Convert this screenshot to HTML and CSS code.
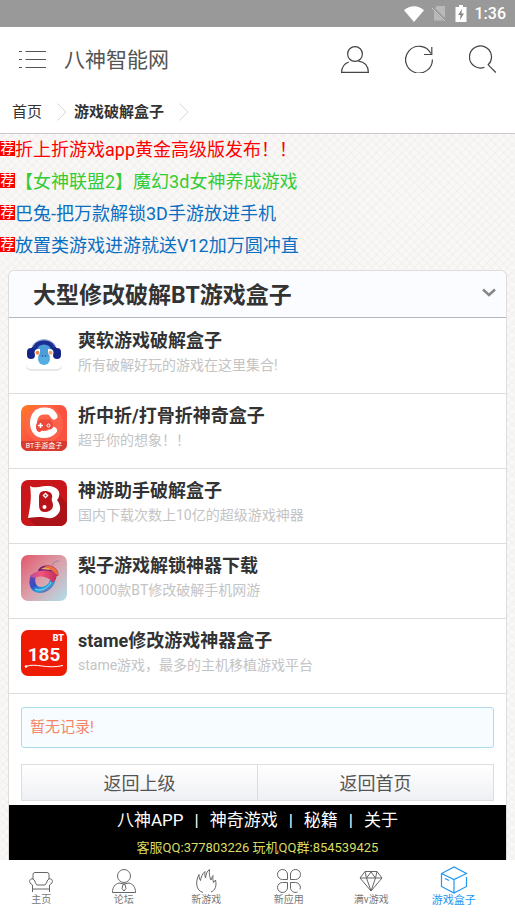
FILE: index.html
```html
<!DOCTYPE html>
<html lang="zh-CN">
<head>
  <meta charset="UTF-8">
  <meta name="viewport" content="width=device-width, initial-scale=1">
  <title>八神智能网</title>
  <link rel="stylesheet" href="styles.css">
</head>
<body>
  <div class="status-bar">
    <svg class="status-wifi" viewBox="0 0 20 16" fill="#fff"><path d="M0 4.200C6-1 14-1 20 4.200L10 16z"/></svg>
    <svg class="status-sim" viewBox="0 0 15 17"><path d="M5 1h8v14.500H2V4z" fill="#b9b9b9"/><path d="M0 2l14 14" stroke="#999" stroke-width="2.500"/><path d="M0 3l13 13" stroke="#c8c8c8"/></svg>
    <svg class="status-battery" viewBox="0 0 12 17"><path d="M4 0h4v2h3.500v15H.5V2H4z" fill="#fff"/><path d="M7 4L3 10h2.500L5 15l4-6.500H6.500z" fill="#888"/></svg>
    <span>1:36</span>
  </div>

  <header class="header">
    <button class="icon-btn" aria-label="菜单">
      <svg viewBox="0 0 28 28" fill="none" stroke="#555"><path d="M0 6.500h3M6.500 6.500h20.500M0 14.500h3M6.500 14.500h20.500M0 22.500h3M6.500 22.500h20.500"/></svg>
    </button>
    <h1>八神智能网</h1>
    <div class="header-actions">
      <button class="icon-btn" aria-label="用户">
        <svg viewBox="0 0 28 28" fill="none" stroke="#444" stroke-width="1.200"><circle cx="14" cy="9" r="7.400"/><path d="M7.800 17C3.300 18.500.8 22 .6 27.300h26.800c-.3-6.500-4.200-10.600-10-11.200"/></svg>
      </button>
      <button class="icon-btn" aria-label="刷新">
        <svg viewBox="0 0 28 28" fill="none" stroke="#444" stroke-width="1.200"><path d="M27.400 14.500a13.400 13.400 0 1 1-1.500-6"/><path d="M26.800 2v7.500H19"/></svg>
      </button>
      <button class="icon-btn" aria-label="搜索">
        <svg viewBox="0 0 28 28" fill="none" stroke="#444" stroke-width="1.200"><path d="M15.500 22.200A11 11 0 1 1 19.200 19.800l7.600 7.700"/></svg>
      </button>
    </div>
  </header>

  <nav class="crumbs">
    <a href="#">首页</a>
    <svg class="crumb-arrow" viewBox="0 0 10 18" fill="none" stroke="#d6d6d6"><path d="M.5.5L9 9l-8.500 8.500"/></svg>
    <a href="#" class="current">游戏破解盒子</a>
    <svg class="crumb-arrow" viewBox="0 0 10 18" fill="none" stroke="#d6d6d6"><path d="M.5.5L9 9l-8.500 8.500"/></svg>
  </nav>

  <ul class="news">
    <li><span class="tag">荐</span><a href="#" class="red">折上折游戏app黄金高级版发布！！</a></li>
    <li><span class="tag">荐</span><a href="#" class="green">【女神联盟2】魔幻3d女神养成游戏</a></li>
    <li><span class="tag">荐</span><a href="#">巴兔-把万款解锁3D手游放进手机</a></li>
    <li><span class="tag">荐</span><a href="#">放置类游戏进游就送V12加万圆冲直</a></li>
  </ul>

  <main class="card">
    <div class="card-header">
      <h2>大型修改破解BT游戏盒子</h2>
      <button class="toggle" aria-label="展开">
        <svg viewBox="0 0 14 9" fill="none" stroke="#888" stroke-width="2.500"><path d="M1 1.500l6 5.500 6-5.500"/></svg>
      </button>
    </div>

    <div class="apps">
      <a class="app" href="#">
        <svg class="app-icon" viewBox="0 0 46 46">
          <rect x="5" y="6" width="36" height="35" rx="5" fill="#e8e8e8"/>
          <rect x="5" y="4" width="36" height="35" rx="5" fill="#fff"/>
          <path d="M10 23C9 5 37 5 36 23z" fill="#1c2f91"/>
          <path d="M11.500 17C15 7.500 31 7.500 34.500 17" fill="none" stroke="#a9c4ea"/>
          <path d="M18 16q5-3 10 0l2 3H16z" fill="#4b9dd9"/>
          <rect x="6" y="18" width="8" height="11" rx="4" fill="#152487"/>
          <rect x="32" y="18" width="8" height="11" rx="4" fill="#152487"/>
          <ellipse cx="23" cy="29" rx="6" ry="6" fill="#55aee2"/>
          <rect x="13.500" y="19" width="19" height="7.500" rx="3.700" fill="#fff"/>
          <path d="M19 19h8v4l2 4H17l2-4z" fill="#4b9dd9"/>
          <circle cx="16.500" cy="22.700" r="2" fill="#e88a45"/>
          <circle cx="29.500" cy="22.700" r="2" fill="#f0aa79"/>
          <path d="M21.500 25.500v1M24.500 25.500v1" stroke="#1c2f91"/>
        </svg>
        <div class="app-text"><h3>爽软游戏破解盒子</h3><p>所有破解好玩的游戏在这里集合!</p></div>
      </a>
      <a class="app" href="#">
        <svg class="app-icon" viewBox="0 0 46 46">
          <defs>
            <linearGradient id="orange" x1="0" y1="0" x2="1" y2="1"><stop offset="0" stop-color="#ff7a25"/><stop offset=".5" stop-color="#fb5140"/></linearGradient>
            <clipPath id="round"><rect width="46" height="46" rx="7"/></clipPath>
          </defs>
          <g clip-path="url(#round)">
            <rect width="46" height="46" fill="url(#orange)"/>
            <circle cx="23" cy="19" r="19" fill="#ff6a54" opacity=".6"/>
            <path d="M0 36h46v10H0z" fill="#d93b30"/>
            <path d="M33 11C30 5 26 6 23 6c-7 0-10.500 5-10.500 12 0 8 5 11.500 10 11.500 4 0 7-.5 10-4" fill="none" stroke="#fff" stroke-width="7" stroke-linecap="round"/>
            <path d="M19 14.500h10q3 3 3 8l-2 2-3-1-2 2-3-1-3 2.500q-4 0-4-5 0-5 4-7.500z" fill="#ee4a3c"/>
            <path d="M19.500 18v5M17 20.500h5" stroke="#fff" stroke-width="1.500"/>
            <circle cx="27.500" cy="20.500" r="1.500" fill="none" stroke="#fff"/>
            <text class="icon-caption" x="23" y="43" text-anchor="middle">BT手游盒子</text>
          </g>
        </svg>
        <div class="app-text"><h3>折中折/打骨折神奇盒子</h3><p>超乎你的想象！！</p></div>
      </a>
      <a class="app" href="#">
        <svg class="app-icon" viewBox="0 0 46 46">
          <rect width="46" height="46" rx="7" fill="#c8161b"/>
          <path d="M7 38l8 8h24a7 7 0 0 0 7-7V24L37 13z" fill="#ac1318"/>
          <path d="M9 6c3 2 5 1 9 1 9-2 18-1 20 5 1 4-1 7-2 8 4 5 4 11 1 14-5 6-10 4-17 3-4 0-8 0-13 1 2-11 4-20 2-32z" fill="#fff"/>
          <path d="M24 11c5 0 8 3 7 7-1 3 1 4 1 7 0 5-4 7-8 7-5 0-6-3-6-8v-7c0-4 2-6 6-6z" fill="#b8141a"/>
          <path d="M24.500 12.500l3 3-3 3-3-3z" fill="#fff"/>
          <circle cx="24.500" cy="15.500" r="1" fill="#b8141a"/>
          <circle cx="23.500" cy="27" r="2" fill="#fff"/>
        </svg>
        <div class="app-text"><h3>神游助手破解盒子</h3><p>国内下载次数上10亿的超级游戏神器</p></div>
      </a>
      <a class="app" href="#">
        <svg class="app-icon" viewBox="0 0 46 46">
          <defs>
            <linearGradient id="sky" x1="0" y1="0" x2="1" y2="1"><stop offset="0" stop-color="#e2566b"/><stop offset=".5" stop-color="#dba0aa"/><stop offset="1" stop-color="#afe0ec"/></linearGradient>
            <linearGradient id="ring" x1="0" y1="0" x2=".8" y2="1"><stop offset="0" stop-color="#7b3fae"/><stop offset=".45" stop-color="#2d4fc4"/><stop offset=".7" stop-color="#27a4df"/><stop offset="1" stop-color="#b13f8f"/></linearGradient>
            <linearGradient id="band" x1="0" y1="0" x2="1" y2="0"><stop offset="0" stop-color="#b64a9b"/><stop offset=".4" stop-color="#f2557c"/><stop offset="1" stop-color="#c22c5c"/></linearGradient>
          </defs>
          <rect width="46" height="46" rx="7" fill="url(#sky)"/>
          <path d="M31 11c1-4 3-5 7-5" fill="none" stroke="#b08da3" stroke-width="1.500"/>
          <path d="M17 16c1-6 12-8 17-3 3 2 4 5 3 8l-6-2z" fill="#6d2277"/>
          <path d="M23 11c7-2 15 3 14.500 10C32 18 30 13 23 11z" fill="#f06a3d"/>
          <path d="M20 14c4-3 8-2 10 1z" fill="#f6a55a"/>
          <path d="M10 20c-4 9 0 18 9 18 8 0 16-7 16-17l-5-1c0 7-4 12-10 12-5 0-7-5-5-11z" fill="url(#ring)"/>
          <path d="M9 21c5-6 20-8 27-1-1 4-2 6-4 8-4-6-12-8-19-5z" fill="url(#band)"/>
          <path d="M14 34c7 3 13-1 16-7" fill="none" stroke="#8adcf2"/>
        </svg>
        <div class="app-text"><h3>梨子游戏解锁神器下载</h3><p>10000款BT修改破解手机网游</p></div>
      </a>
      <a class="app" href="#">
        <svg class="app-icon" viewBox="0 0 46 46">
          <rect width="46" height="46" rx="7" fill="#ee1b05"/>
          <text class="icon-bt" x="43" y="11" text-anchor="end">BT</text>
          <text class="icon-num" x="23" y="31" text-anchor="middle">185</text>
          <path d="M5 36.500c10-4 20 3 37-1" fill="none" stroke="#fff"/>
          <circle cx="5" cy="36.500" r="1.300" fill="#fff"/>
        </svg>
        <div class="app-text"><h3>stame修改游戏神器盒子</h3><p>stame游戏，最多的主机移植游戏平台</p></div>
      </a>
    </div>

    <p class="notice">暂无记录!</p>

    <div class="pager">
      <button>返回上级</button>
      <button>返回首页</button>
    </div>

    <footer class="footer">
      <div class="footer-links">
        <a href="#">八神APP</a><span>|</span><a href="#">神奇游戏</a><span>|</span><a href="#">秘籍</a><span>|</span><a href="#">关于</a>
      </div>
      <p>客服QQ:377803226 玩机QQ群:854539425</p>
    </footer>
  </main>

  <nav class="tabbar">
    <a href="#">
      <svg viewBox="0 0 24 24" fill="none" stroke="#666"><path d="M4 10V5.500Q4 3.500 6 3.500h12q2 0 2 2V10M4 10C1 9 0 12 1 14l2.500 2v4h17v-4l2.500-2c1-2 0-5-3-4-2 1-2 3-2.500 4L16 16H8l-1.500-2C6 13 6 11 4 10zM3.500 20v3M20.500 20v3"/></svg>
      主页
    </a>
    <a href="#">
      <svg viewBox="0 0 24 24" fill="none" stroke="#666"><circle cx="12" cy="7" r="6.500"/><path d="M7 14C3 15 .5 18 .5 23.500h23c0-5.500-2.500-8.500-6.500-9.500l-5 1zM11 15.500h2l1 4-2 2.500-2-2.500z"/></svg>
      论坛
    </a>
    <a href="#">
      <svg viewBox="0 0 24 24" fill="none" stroke="#666"><path d="M9 23.500C2 21.500 1 13 5 5.500c0 3 .5 4.500 1.500 6C7 8 8.500 4.500 11 2.500c-.5 3 0 4.500.5 6.500C12 5 13 2 15.500.5 15 5 15.500 8 17 11c.5-2 1-3 2-4.500-.5 3 0 4.500.5 7l2-2.500c1.500 6-.5 10.500-4.500 12"/></svg>
      新游戏
    </a>
    <a href="#">
      <svg viewBox="0 0 24 24" fill="none" stroke="#666"><path d="M10.500 10.500V6a5 5 0 1 0-5 4.500zM13.500 10.500V6a5 5 0 1 1 5 4.500zM10.500 13.500V18a5 5 0 1 1-5-4.500zM23 20.500a5 5 0 0 0-4.500-7h-5V18a5 5 0 0 0 7 5"/></svg>
      新应用
    </a>
    <a href="#">
      <svg viewBox="0 0 24 24" fill="none" stroke="#666"><path d="M6 2.500h12L23 9 12 22 1 9zM1 9h22M6 2.500L7.500 9 12 22l4.500-13L18 2.500M7.500 9L12 3l4.500 6"/></svg>
      满v游戏
    </a>
    <a href="#" class="active">
      <svg viewBox="0 0 28 28" fill="none" stroke="#2196f3" stroke-width="1.200"><path d="M26.500 11v9.500L14 27 1.500 20.500v-13L14 1l12.500 6.500L14 13.500 1.500 7.500M14 13.500V27M5 12.500l4 2"/></svg>
      游戏盒子
    </a>
  </nav>
</body>
</html>
```

FILE: styles.css
```css
* {
  box-sizing: border-box;
  margin: 0;
  padding: 0;
}

body {
  font-family: Roboto, "Noto Sans CJK SC", sans-serif;
  color: #333;
  padding-bottom: 55px;
  background-color: #f9f8f7;
  background-image:
    repeating-linear-gradient(45deg, #efedeb66 0 2px, transparent 2px 6px),
    repeating-linear-gradient(-45deg, #efedeb66 0 2px, transparent 2px 6px);
}

a {
  color: inherit;
  text-decoration: none;
}

ul {
  list-style: none;
}

svg {
  display: block;
  flex: none;
}

button {
  font: inherit;
  color: inherit;
  background: none;
  border: none;
  cursor: pointer;
}

.status-bar {
  display: flex;
  align-items: center;
  justify-content: flex-end;
  gap: 8px;
  height: 27px;
  padding-right: 9px;
  background: #999;
  color: #fff;
  font-size: 16px;
  font-weight: 500;
}

.status-wifi {
  width: 20px;
  height: 16px;
}

.status-sim {
  width: 15px;
  height: 17px;
}

.status-battery {
  width: 12px;
  height: 17px;
}

.header {
  display: flex;
  align-items: center;
  gap: 17px;
  height: 64px;
  padding: 0 18px 0 19px;
  background: #fff;
}

.header h1 {
  flex: 1;
  padding-bottom: 3px;
  font-size: 21px;
  font-weight: 400;
  color: #555;
}

.header-actions {
  display: flex;
  gap: 36px;
}

.icon-btn,
.icon-btn svg {
  width: 28px;
  height: 28px;
}

.crumbs {
  display: flex;
  align-items: center;
  height: 43px;
  padding: 0 12px;
  background: #fff;
  border-bottom: 1px solid #ccc8cc;
  font-size: 15px;
}

.crumbs a {
  padding-bottom: 4px;
}

.crumb-arrow {
  width: 10px;
  height: 18px;
  margin: 0 7px 0 15px;
}

.current {
  font-weight: 700;
}

.news li {
  display: flex;
  align-items: center;
  height: 32px;
  padding-bottom: 4px;
  font-size: 18px;
  color: #0a6fc2;
}

.news .red {
  color: #f00;
}

.news .green {
  color: #3c3;
}

.tag {
  width: 15px;
  height: 15px;
  background: #f00;
  color: #fff;
  font-size: 14px;
  line-height: 14px;
  text-align: center;
}

.card {
  margin: 8px 8px 0;
  background: #fff;
  border: 1px solid #ddd;
  border-bottom: none;
  border-radius: 6px 6px 0 0;
}

.card-header {
  display: flex;
  align-items: center;
  justify-content: space-between;
  height: 47px;
  padding: 0 10px 3px 24px;
  background: #fafcff;
  border-bottom: 1px solid #b4b8c0;
  border-radius: 6px 6px 0 0;
}

.card-header h2 {
  font-size: 23px;
  font-weight: 700;
}

.toggle svg {
  width: 14px;
  height: 9px;
}

.apps {
  padding-top: 1px;
}

.app {
  display: flex;
  gap: 11px;
  height: 75px;
  padding: 11px 12px 0;
  border-bottom: 1px solid #ddd;
}

.app-icon {
  width: 46px;
  height: 46px;
}

.app h3 {
  font-size: 18px;
  line-height: 22px;
  font-weight: 700;
}

.app p {
  font-size: 14px;
  line-height: 26px;
  color: #c4c4c4;
}

.icon-caption {
  font-size: 7px;
  fill: #fff;
}

.icon-bt {
  font-size: 9px;
  font-weight: 900;
  fill: #fff;
}

.icon-num {
  font-size: 19px;
  font-weight: 700;
  fill: #fff;
}

.notice {
  margin: 13px 12px 16px;
  padding: 0 8px;
  background: #f6fcff;
  border: 1px solid #addbf0;
  border-radius: 3px;
  color: #f58468;
  font-size: 15px;
  line-height: 39px;
}

.pager {
  display: flex;
  margin: 0 12px 4px;
  border: 1px solid #ddd;
  background: linear-gradient(#fff, #eff0f4);
}

.pager button {
  flex: 1;
  height: 35px;
  padding-bottom: 2px;
  font-size: 18px;
  color: #555;
}

.pager button + button {
  border-left: 1px solid #ddd;
}

.footer {
  height: 55px;
  background: #000;
  color: #fff;
  text-align: center;
}

.footer-links {
  display: flex;
  justify-content: center;
  gap: 11px;
  font-size: 17px;
  line-height: 30px;
}

.footer p {
  font-size: 13px;
  line-height: 25px;
  color: #d9dc63;
}

.tabbar {
  position: fixed;
  left: 0;
  right: 0;
  bottom: 0;
  display: flex;
  height: 55px;
  padding: 9px 20px 0 0;
  background: #fff;
}

.tabbar a {
  flex: 1;
  display: flex;
  flex-direction: column;
  align-items: center;
  font-size: 10px;
  line-height: 14px;
  color: #777;
}

.tabbar svg {
  width: 24px;
  height: 24px;
}

.tabbar .active {
  font-size: 11px;
  color: #2196f3;
}

.tabbar .active svg {
  width: 28px;
  height: 28px;
  margin-top: -3px;
}
```
